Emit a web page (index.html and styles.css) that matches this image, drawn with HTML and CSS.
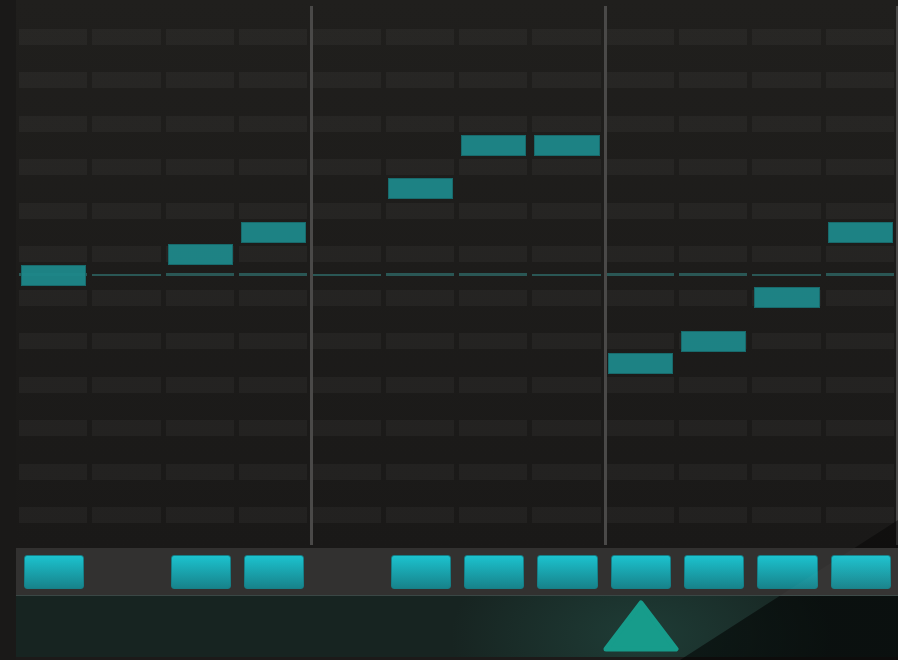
FILE: index.html
```html
<!DOCTYPE html>
<html lang="en">
<head>
    <meta charset="UTF-8">
    <meta name="viewport" content="width=device-width, initial-scale=1.0">
    <title>Step Sequencer</title>
    <link rel="stylesheet" href="styles.css">
</head>
<body>
    <div class="app">
        <!-- Left edge strip -->
        <div class="edge"></div>

        <div class="editor">
            <!-- Note roll: 12 steps, 25 pitch slots -->
            <div class="roll">
                <div class="lane" style="--step:1"></div>
                <div class="lane" style="--step:2"></div>
                <div class="lane" style="--step:3"></div>
                <div class="lane" style="--step:4"></div>
                <div class="lane" style="--step:5"></div>
                <div class="lane" style="--step:6"></div>
                <div class="lane" style="--step:7"></div>
                <div class="lane" style="--step:8"></div>
                <div class="lane" style="--step:9"></div>
                <div class="lane" style="--step:10"></div>
                <div class="lane" style="--step:11"></div>
                <div class="lane" style="--step:12"></div>

                <div class="bar bar-5"></div>
                <div class="bar bar-9"></div>
                <div class="bar bar-end"></div>

                <div class="note" style="--step:1;--pitch:0"></div>
                <div class="note" style="--step:3;--pitch:1"></div>
                <div class="note" style="--step:4;--pitch:2"></div>
                <div class="note" style="--step:6;--pitch:4"></div>
                <div class="note" style="--step:7;--pitch:6"></div>
                <div class="note" style="--step:8;--pitch:6"></div>
                <div class="note" style="--step:9;--pitch:-4"></div>
                <div class="note" style="--step:10;--pitch:-3"></div>
                <div class="note" style="--step:11;--pitch:-1"></div>
                <div class="note" style="--step:12;--pitch:2"></div>
            </div>

            <!-- Step buttons -->
            <div class="steps">
                <button class="step" style="--step:1"></button>
                <button class="step" style="--step:3"></button>
                <button class="step" style="--step:4"></button>
                <button class="step" style="--step:6"></button>
                <button class="step" style="--step:7"></button>
                <button class="step" style="--step:8"></button>
                <button class="step" style="--step:9"></button>
                <button class="step" style="--step:10"></button>
                <button class="step" style="--step:11"></button>
                <button class="step" style="--step:12"></button>
            </div>

            <!-- Playhead track -->
            <div class="track">
                <svg class="playhead" style="--step:9" width="76" height="52" viewBox="0 0 76 52">
                    <polygon points="38,3 73,49 3,49" fill="#179c8b" stroke="#179c8b" stroke-width="5" stroke-linejoin="round"/>
                </svg>
            </div>

            <div class="foot"></div>
        </div>

        <!-- Diagonal shadow over the bottom right -->
        <div class="shade"></div>
    </div>
</body>
</html>
```

FILE: styles.css
```css
* {
    box-sizing: border-box;
}

body {
    margin: 0;
    font-family: 'Liberation Sans', Arial, sans-serif;
    background-color: #1a1918;
    overflow: hidden;
}

.app {
    position: relative;
    display: flex;
    width: 898px;
    height: 660px;
}

.edge {
    width: 16px;
    background-color: #1a1918;
}

.editor {
    flex: 1;
    min-width: 0;
    display: flex;
    flex-direction: column;
}

/* Note roll */
.roll {
    height: 548px;
    padding: 4px 0 0 2px;
    display: grid;
    grid-template-columns: repeat(12, minmax(0, 1fr));
    grid-template-rows: repeat(25, minmax(0, 1fr));
    background: linear-gradient(#201f1d, #1a1918);
}

.lane {
    grid-column: var(--step);
    grid-row: 1 / -1;
    margin: 0 4px 0 1px;
    background:
        linear-gradient(to bottom, transparent 269.5px, #2a5755 269.5px, #2a5755 272.5px, transparent 272.5px),
        repeating-linear-gradient(to bottom, transparent 0 24.6px, rgba(255, 255, 255, 0.035) 24.6px 40.6px, transparent 40.6px 43.52px);
}

.bar {
    grid-row: 1 / -1;
    width: 3px;
    margin: 2px 0 3px -1px;
    background-color: #4a4948;
}

.bar-5 {
    grid-column: 5;
}

.bar-9 {
    grid-column: 9;
}

.bar-end {
    grid-column: 12;
    justify-self: end;
    width: 2px;
    margin-right: 0;
}

.note {
    grid-column: var(--step);
    grid-row: calc(13 - var(--pitch));
    align-self: center;
    height: 21px;
    margin: 0 5px 0 3px;
    background-color: rgba(30, 136, 138, 0.95);
    border: 1px solid #186a6c;
}

/* Step buttons */
.steps {
    height: 48px;
    padding: 7px 0 6px 2px;
    display: grid;
    grid-template-columns: repeat(12, minmax(0, 1fr));
    background-color: #323130;
    border-bottom: 1px solid #3a4745;
}

.step {
    grid-column: var(--step);
    margin: 0 7px 0 6px;
    padding: 0;
    border: 1px solid #167f87;
    border-radius: 3px;
    background: linear-gradient(#1cc2ce, #17838b);
    cursor: pointer;
}

/* Playhead track */
.track {
    height: 61px;
    padding: 4px 0 0 2px;
    display: grid;
    grid-template-columns: repeat(12, minmax(0, 1fr));
    align-items: start;
    background:
        radial-gradient(ellipse 190px 110px at 625px 40px, rgba(40, 90, 80, 0.45), transparent),
        #172421;
}

.playhead {
    grid-column: var(--step);
    justify-self: center;
    display: block;
}

.foot {
    height: 3px;
    background-color: #1c1a19;
}

.shade {
    position: absolute;
    inset: 0;
    pointer-events: none;
    clip-path: polygon(898px 520px, 898px 660px, 680px 660px);
    background: linear-gradient(to bottom,
        rgba(0, 0, 0, 0.4) 548px,
        rgba(255, 255, 255, 0.02) 548px 596px,
        rgba(0, 0, 0, 0.55) 596px);
}
```
